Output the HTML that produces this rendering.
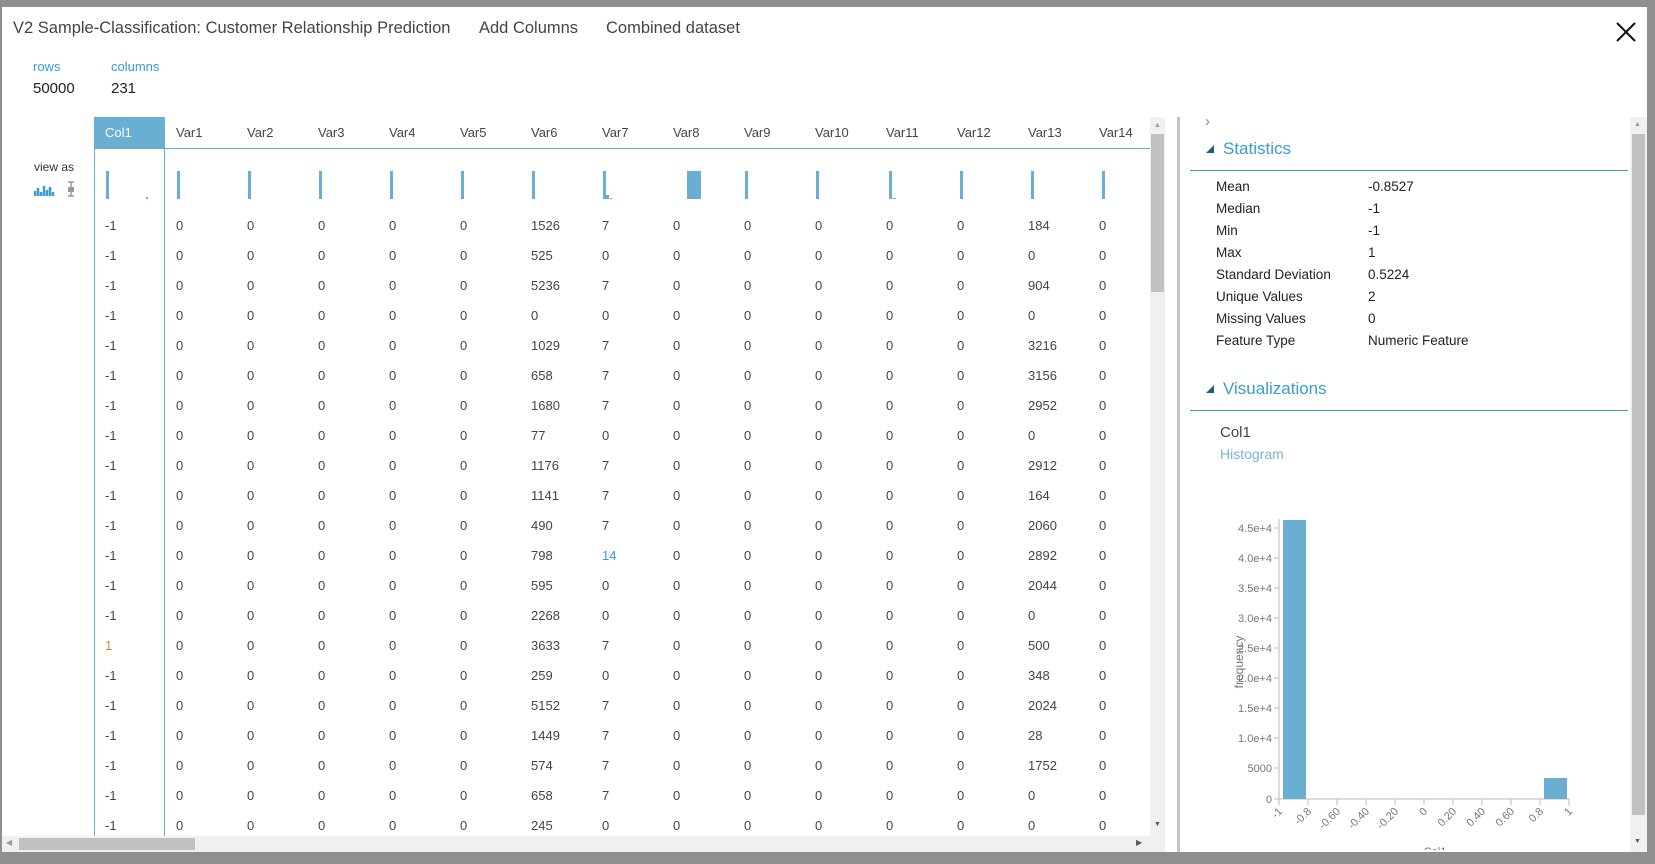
<!DOCTYPE html>
<html><head><meta charset="utf-8"><style>
*{margin:0;padding:0;box-sizing:border-box}
body{width:1655px;height:864px;overflow:hidden;background:#8f8f8f;font-family:"Liberation Sans",sans-serif;position:relative}
.a{position:absolute}
#dlg{left:2px;top:7px;width:1645px;height:845px;background:#fff}
.t{font-size:16.5px;color:#444;top:19px;white-space:nowrap}
.lb{font-size:13px;color:#3a9bd0}
.vl{font-size:15px;color:#222}
.hdr{top:117px;height:32px;left:94px;width:1056px;border-bottom:1px solid #6aaed2;white-space:nowrap;overflow:hidden;font-size:0}
.hdr span,.row span{display:inline-block;width:71px;padding-left:11px;font-size:13px;color:#444}
.hdr span{line-height:31px}
.row{left:94px;height:30px;line-height:30px;white-space:nowrap;font-size:0}
.bar{background:#6aaed2;top:171px;height:28px;width:3px}
.st{font-size:13.5px;color:#222;left:1216px}
.sv{font-size:13.5px;color:#222;left:1368px}
</style></head><body>
<div class="a" style="left:0;top:0;width:1655px;height:7px;background:#8f8f8f"></div>
<div id="dlg" class="a"></div>
<div class="a t" style="left:13px">V2 Sample-Classification: Customer Relationship Prediction</div>
<div class="a t" style="left:479px">Add Columns</div>
<div class="a t" style="left:606px">Combined dataset</div>
<svg class="a" style="left:1615px;top:21px" width="22" height="22"><path d="M2 2L20 20M20 2L2 20" stroke="#111" stroke-width="2"/></svg>
<div class="a lb" style="left:33px;top:59px">rows</div>
<div class="a lb" style="left:111px;top:59px">columns</div>
<div class="a vl" style="left:33px;top:80px">50000</div>
<div class="a vl" style="left:111px;top:80px">231</div>
<div class="a" style="left:34px;top:160px;font-size:12px;color:#333">view as</div>
<svg class="a" style="left:34px;top:180px" width="46" height="18"><path d="M1 16V11M4 16V8M7 16V12M10 16V6M13 16V10M16 16V7M19 16V12" stroke="#3a9bd0" stroke-width="2.5"/><path d="M37 2V16M34 2H40M34 16H40" stroke="#999" stroke-width="1.5"/><rect x="34" y="7" width="6" height="5" fill="#999"/></svg>
<!-- header -->
<div class="a" style="left:94px;top:117px;width:71px;height:32px;background:#6aaed2"></div>
<div class="a hdr"><span style="color:#fff">Col1</span><span>Var1</span><span>Var2</span><span>Var3</span><span>Var4</span><span>Var5</span><span>Var6</span><span>Var7</span><span>Var8</span><span>Var9</span><span>Var10</span><span>Var11</span><span>Var12</span><span>Var13</span><span>Var14</span></div>
<div class="a" style="left:94px;top:149px;width:1px;height:687px;background:#6aaed2"></div>
<div class="a" style="left:164px;top:149px;width:1px;height:687px;background:#6aaed2"></div>
<!-- bars -->
<div class="a bar" style="left:106px"></div><div class="a" style="left:146px;top:197px;width:2px;height:2px;background:#6aaed2"></div>
<div class="a bar" style="left:177px"></div><div class="a bar" style="left:248px"></div><div class="a bar" style="left:319px"></div><div class="a bar" style="left:390px"></div><div class="a bar" style="left:461px"></div><div class="a bar" style="left:532px"></div>
<div class="a bar" style="left:603px"></div><div class="a" style="left:606px;top:195px;width:3px;height:4px;background:#6aaed2"></div><div class="a" style="left:610px;top:198px;width:2px;height:1px;background:#6aaed2"></div>
<div class="a bar" style="left:687px;width:14px"></div>
<div class="a bar" style="left:745px"></div><div class="a bar" style="left:816px"></div><div class="a bar" style="left:889px"></div><div class="a" style="left:893px;top:198px;width:3px;height:1px;background:#6aaed2"></div><div class="a bar" style="left:960px"></div><div class="a bar" style="left:1031px"></div><div class="a bar" style="left:1102px"></div>
<!-- rows -->
<div class="a row" style="top:211px"><span>-1</span><span>0</span><span>0</span><span>0</span><span>0</span><span>0</span><span>1526</span><span>7</span><span>0</span><span>0</span><span>0</span><span>0</span><span>0</span><span>184</span><span>0</span></div>
<div class="a row" style="top:241px"><span>-1</span><span>0</span><span>0</span><span>0</span><span>0</span><span>0</span><span>525</span><span>0</span><span>0</span><span>0</span><span>0</span><span>0</span><span>0</span><span>0</span><span>0</span></div>
<div class="a row" style="top:271px"><span>-1</span><span>0</span><span>0</span><span>0</span><span>0</span><span>0</span><span>5236</span><span>7</span><span>0</span><span>0</span><span>0</span><span>0</span><span>0</span><span>904</span><span>0</span></div>
<div class="a row" style="top:301px"><span>-1</span><span>0</span><span>0</span><span>0</span><span>0</span><span>0</span><span>0</span><span>0</span><span>0</span><span>0</span><span>0</span><span>0</span><span>0</span><span>0</span><span>0</span></div>
<div class="a row" style="top:331px"><span>-1</span><span>0</span><span>0</span><span>0</span><span>0</span><span>0</span><span>1029</span><span>7</span><span>0</span><span>0</span><span>0</span><span>0</span><span>0</span><span>3216</span><span>0</span></div>
<div class="a row" style="top:361px"><span>-1</span><span>0</span><span>0</span><span>0</span><span>0</span><span>0</span><span>658</span><span>7</span><span>0</span><span>0</span><span>0</span><span>0</span><span>0</span><span>3156</span><span>0</span></div>
<div class="a row" style="top:391px"><span>-1</span><span>0</span><span>0</span><span>0</span><span>0</span><span>0</span><span>1680</span><span>7</span><span>0</span><span>0</span><span>0</span><span>0</span><span>0</span><span>2952</span><span>0</span></div>
<div class="a row" style="top:421px"><span>-1</span><span>0</span><span>0</span><span>0</span><span>0</span><span>0</span><span>77</span><span>0</span><span>0</span><span>0</span><span>0</span><span>0</span><span>0</span><span>0</span><span>0</span></div>
<div class="a row" style="top:451px"><span>-1</span><span>0</span><span>0</span><span>0</span><span>0</span><span>0</span><span>1176</span><span>7</span><span>0</span><span>0</span><span>0</span><span>0</span><span>0</span><span>2912</span><span>0</span></div>
<div class="a row" style="top:481px"><span>-1</span><span>0</span><span>0</span><span>0</span><span>0</span><span>0</span><span>1141</span><span>7</span><span>0</span><span>0</span><span>0</span><span>0</span><span>0</span><span>164</span><span>0</span></div>
<div class="a row" style="top:511px"><span>-1</span><span>0</span><span>0</span><span>0</span><span>0</span><span>0</span><span>490</span><span>7</span><span>0</span><span>0</span><span>0</span><span>0</span><span>0</span><span>2060</span><span>0</span></div>
<div class="a row" style="top:541px"><span>-1</span><span>0</span><span>0</span><span>0</span><span>0</span><span>0</span><span>798</span><span style="color:#3a9bd0">14</span><span>0</span><span>0</span><span>0</span><span>0</span><span>0</span><span>2892</span><span>0</span></div>
<div class="a row" style="top:571px"><span>-1</span><span>0</span><span>0</span><span>0</span><span>0</span><span>0</span><span>595</span><span>0</span><span>0</span><span>0</span><span>0</span><span>0</span><span>0</span><span>2044</span><span>0</span></div>
<div class="a row" style="top:601px"><span>-1</span><span>0</span><span>0</span><span>0</span><span>0</span><span>0</span><span>2268</span><span>0</span><span>0</span><span>0</span><span>0</span><span>0</span><span>0</span><span>0</span><span>0</span></div>
<div class="a row" style="top:631px"><span style="color:#c8903a">1</span><span>0</span><span>0</span><span>0</span><span>0</span><span>0</span><span>3633</span><span>7</span><span>0</span><span>0</span><span>0</span><span>0</span><span>0</span><span>500</span><span>0</span></div>
<div class="a row" style="top:661px"><span>-1</span><span>0</span><span>0</span><span>0</span><span>0</span><span>0</span><span>259</span><span>0</span><span>0</span><span>0</span><span>0</span><span>0</span><span>0</span><span>348</span><span>0</span></div>
<div class="a row" style="top:691px"><span>-1</span><span>0</span><span>0</span><span>0</span><span>0</span><span>0</span><span>5152</span><span>7</span><span>0</span><span>0</span><span>0</span><span>0</span><span>0</span><span>2024</span><span>0</span></div>
<div class="a row" style="top:721px"><span>-1</span><span>0</span><span>0</span><span>0</span><span>0</span><span>0</span><span>1449</span><span>7</span><span>0</span><span>0</span><span>0</span><span>0</span><span>0</span><span>28</span><span>0</span></div>
<div class="a row" style="top:751px"><span>-1</span><span>0</span><span>0</span><span>0</span><span>0</span><span>0</span><span>574</span><span>7</span><span>0</span><span>0</span><span>0</span><span>0</span><span>0</span><span>1752</span><span>0</span></div>
<div class="a row" style="top:781px"><span>-1</span><span>0</span><span>0</span><span>0</span><span>0</span><span>0</span><span>658</span><span>7</span><span>0</span><span>0</span><span>0</span><span>0</span><span>0</span><span>0</span><span>0</span></div>
<div class="a row" style="top:811px;height:25px;overflow:hidden"><span>-1</span><span>0</span><span>0</span><span>0</span><span>0</span><span>0</span><span>245</span><span>0</span><span>0</span><span>0</span><span>0</span><span>0</span><span>0</span><span>0</span><span>0</span></div>
<!-- scrollbars -->
<div class="a" style="left:1150px;top:117px;width:15px;height:719px;background:#f0f0f0"></div>
<div class="a" style="left:1151px;top:134px;width:13px;height:158px;background:#c1c1c1"></div>
<div class="a" style="left:1154px;top:122px;font-size:7px;color:#999">▲</div>
<div class="a" style="left:1154px;top:821px;font-size:7px;color:#555">▼</div>
<div class="a" style="left:2px;top:836px;width:1163px;height:16px;background:#f0f0f0"></div>
<div class="a" style="left:19px;top:838px;width:176px;height:12px;background:#c1c1c1"></div>
<div class="a" style="left:6px;top:838px;font-size:8px;color:#999">◀</div>
<div class="a" style="left:1136px;top:838px;font-size:8px;color:#555">▶</div>
<!-- right panel -->
<div class="a" style="left:1177px;top:117px;width:3px;height:735px;background:#c4c4c4"></div>
<div class="a" style="left:1205px;top:113px;font-size:15px;color:#888">›</div>
<svg class="a" style="left:1206px;top:145px" width="9" height="9"><path d="M8 0V8H0Z" fill="#1f5f86"/></svg>
<div class="a" style="left:1223px;top:139px;font-size:17px;color:#3a9bd0">Statistics</div>
<div class="a" style="left:1190px;top:170px;width:438px;height:1px;background:#3a9fcc"></div>
<div class="a st" style="top:179px">Mean</div><div class="a sv" style="top:179px">-0.8527</div>
<div class="a st" style="top:201px">Median</div><div class="a sv" style="top:201px">-1</div>
<div class="a st" style="top:223px">Min</div><div class="a sv" style="top:223px">-1</div>
<div class="a st" style="top:245px">Max</div><div class="a sv" style="top:245px">1</div>
<div class="a st" style="top:267px">Standard Deviation</div><div class="a sv" style="top:267px">0.5224</div>
<div class="a st" style="top:289px">Unique Values</div><div class="a sv" style="top:289px">2</div>
<div class="a st" style="top:311px">Missing Values</div><div class="a sv" style="top:311px">0</div>
<div class="a st" style="top:333px">Feature Type</div><div class="a sv" style="top:333px">Numeric Feature</div>
<svg class="a" style="left:1206px;top:385px" width="9" height="9"><path d="M8 0V8H0Z" fill="#1f5f86"/></svg>
<div class="a" style="left:1223px;top:379px;font-size:17px;color:#3a9bd0">Visualizations</div>
<div class="a" style="left:1190px;top:410px;width:438px;height:1px;background:#3a9fcc"></div>
<div class="a" style="left:1220px;top:424px;font-size:15px;color:#444">Col1</div>
<div class="a" style="left:1220px;top:446px;font-size:14px;color:#7ab3d8">Histogram</div>
<!-- chart -->
<svg class="a" style="left:1230px;top:510px" width="360" height="340">
<g stroke="#bbb" fill="none"><path d="M49 9V289H339V296"/><path d="M44 18H49M44 48H49M44 78H49M44 108H49M44 138H49M44 168H49M44 198H49M44 228H49M44 258H49M44 289H49"/>
<path d="M49 289V295M78 289V295M107 289V295M136 289V295M165 289V295M194 289V295M223 289V295M252 289V295M281 289V295M310 289V295"/></g>
<rect x="53" y="10" width="23" height="279" fill="#6aaed2"/>
<rect x="314" y="268" width="23" height="21" fill="#6aaed2"/>
<g font-family="Liberation Sans" font-size="11" fill="#777" text-anchor="end">
<text x="42" y="22">4.5e+4</text><text x="42" y="52">4.0e+4</text><text x="42" y="82">3.5e+4</text><text x="42" y="112">3.0e+4</text><text x="42" y="142">2.5e+4</text><text x="42" y="172">2.0e+4</text><text x="42" y="202">1.5e+4</text><text x="42" y="232">1.0e+4</text><text x="42" y="262">5000</text><text x="42" y="293">0</text>
<text transform="translate(13,152) rotate(-90)" text-anchor="middle" font-size="12">frequency</text>
<text transform="translate(53,302) rotate(-45)">-1</text><text transform="translate(82,302) rotate(-45)">-0.8</text><text transform="translate(111,302) rotate(-45)">-0.60</text><text transform="translate(140,302) rotate(-45)">-0.40</text><text transform="translate(169,302) rotate(-45)">-0.20</text><text transform="translate(198,302) rotate(-45)">0</text><text transform="translate(227,302) rotate(-45)">0.20</text><text transform="translate(256,302) rotate(-45)">0.40</text><text transform="translate(285,302) rotate(-45)">0.60</text><text transform="translate(314,302) rotate(-45)">0.8</text><text transform="translate(343,302) rotate(-45)">1</text>
<text x="205" y="345" text-anchor="middle">Col1</text></g>
</svg>
<div class="a" style="left:1630px;top:117px;width:17px;height:735px;background:#f0f0f0"></div>
<div class="a" style="left:1632px;top:134px;width:13px;height:681px;background:#c1c1c1"></div>
<div class="a" style="left:1634px;top:121px;font-size:7px;color:#999">▲</div>
<div class="a" style="left:1634px;top:838px;font-size:7px;color:#555">▼</div>
<div class="a" style="left:0;top:852px;width:1655px;height:12px;background:#8f8f8f"></div>
</body></html>
